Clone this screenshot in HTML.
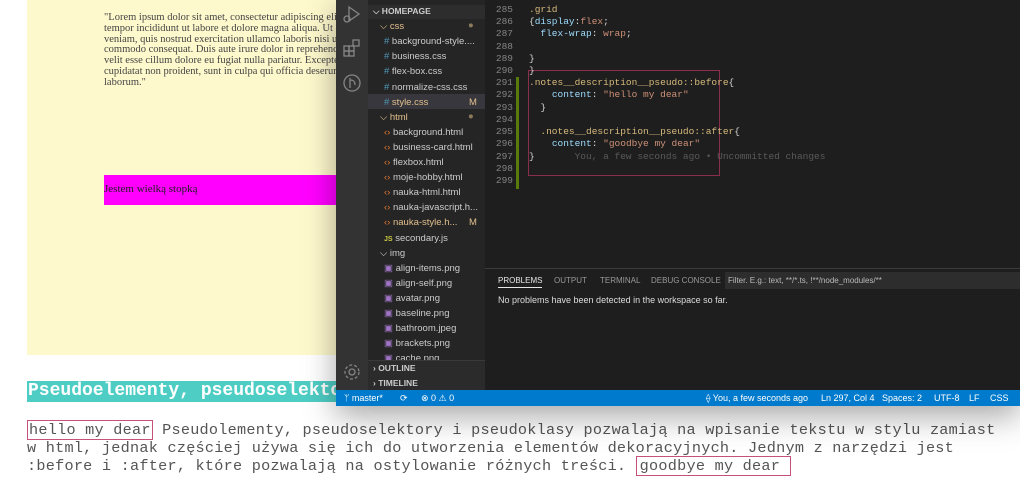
<!DOCTYPE html><html><head><meta charset="utf-8"><style>
*{margin:0;padding:0;box-sizing:border-box}
body{width:1020px;height:491px;overflow:hidden;background:#fff;position:relative;font-family:"Liberation Sans",sans-serif}
.abs{position:absolute}
.yellow{left:27px;top:0;width:309px;height:355px;background:#fef9cc}
.lorem{left:104px;top:13px;width:232px;font:10.5px/10.8px "Liberation Serif",serif;color:#444;white-space:nowrap;overflow:hidden}
.mag{left:104px;top:175px;width:232px;height:30px;background:#f0f;font:11px "Liberation Serif",serif;color:#222;padding-top:8px}
.head{left:27px;top:381px;width:309px;height:21px;background:#4ecdc4;color:#fff;font:bold 18px "Liberation Mono",monospace;padding:0 1px;white-space:nowrap;overflow:hidden}
.para{left:27px;top:421px;font:15.2px/18px "Liberation Mono",monospace;letter-spacing:0.25px;color:#555;white-space:pre}
.box{border:1px solid #c94f7c}
.win{left:336px;top:0;width:684px;height:406px;background:#1e1e1e;box-shadow:0 10px 30px rgba(0,0,0,.35)}
.act{left:0;top:0;width:32px;height:390px;background:#333}
.side{left:32px;top:0;width:117px;height:390px;background:#252526;font-size:9.5px;color:#ccc}
.side div{position:absolute;white-space:nowrap}
.ed{left:149px;top:0;width:535px;height:268px;background:#1e1e1e;font:9.5px "Liberation Mono",monospace}
.ln{position:absolute;left:8px;width:20px;text-align:right;color:#858585}
.cd{position:absolute;left:44px;white-space:pre;color:#d4d4d4}
.sel{color:#d7ba7d}.pr{color:#9cdcfe}.st{color:#ce9178}
.status{left:0;top:390px;width:684px;height:16px;background:#007acc;color:#fff;font-size:9px}
.status span{position:absolute;top:3px;white-space:nowrap}
</style></head><body>
<div class="abs yellow"></div>
<div class="abs lorem">"Lorem ipsum dolor sit amet, consectetur adipiscing elit, sed<br>tempor incididunt ut labore et dolore magna aliqua. Ut enim<br>veniam, quis nostrud exercitation ullamco laboris nisi ut aliq<br>commodo consequat. Duis aute irure dolor in reprehenderit i<br>velit esse cillum dolore eu fugiat nulla pariatur. Excepteur si<br>cupidatat non proident, sunt in culpa qui officia deserunt mo<br>laborum."</div>
<div class="abs mag">Jestem wielką stopką</div>
<div class="abs head">Pseudoelementy, pseudoselektory</div>
<div class="abs para"><span class="box" style="padding:0 1px">hello my dear</span> Pseudolementy, pseudoselektory i pseudoklasy pozwalają na wpisanie tekstu w stylu zamiast
w html, jednak częściej używa się ich do utworzenia elementów dekoracyjnych. Jednym z narzędzi jest
:before i :after, które pozwalają na ostylowanie różnych treści. <span class="box" style="padding:0 10px 0 3px">goodbye my dear</span></div>
<div class="abs win">
<div class="abs act">
<svg class="abs" style="left:6px;top:4px" width="20" height="20" viewBox="0 0 20 20" fill="none" stroke="#858585" stroke-width="1.3"><path d="M7 3l10 7-10 7z"/><circle cx="5" cy="15" r="3"/></svg>
<svg class="abs" style="left:6px;top:38px" width="20" height="20" viewBox="0 0 20 20" fill="none" stroke="#858585" stroke-width="1.3"><rect x="2" y="8" width="5" height="5"/><rect x="7" y="8" width="5" height="5"/><rect x="2" y="13" width="5" height="5"/><rect x="7" y="13" width="5" height="5"/><rect x="11" y="2" width="6" height="6"/></svg>
<svg class="abs" style="left:6px;top:73px" width="20" height="20" viewBox="0 0 20 20" fill="none" stroke="#858585" stroke-width="1.3"><circle cx="10" cy="10" r="8"/><path d="M8 5v10M8 7c4 0 5 2 5 5"/></svg>
<svg class="abs" style="left:6px;top:362px" width="20" height="20" viewBox="0 0 20 20" fill="none" stroke="#858585" stroke-width="1.3"><circle cx="10" cy="10" r="3"/><circle cx="10" cy="10" r="7" stroke-dasharray="3 2"/></svg>
</div>
<div class="abs side">
<div style="left:0;top:5px;width:117px;height:14px;background:#2d2d2e"></div>
<div style="left:5px;top:6px;font-weight:bold;font-size:8.5px">⌵ HOMEPAGE</div>
<div style="left:12px;top:21px;color:#e2c08d">⌵ css</div><div style="left:100px;top:20px;color:#8c7a5c">●</div>
<div style="left:16px;top:36px"><span style="color:#519aba">#</span> background-style....</div>
<div style="left:16px;top:51px"><span style="color:#519aba">#</span> business.css</div>
<div style="left:16px;top:66px"><span style="color:#519aba">#</span> flex-box.css</div>
<div style="left:16px;top:82px"><span style="color:#519aba">#</span> normalize-css.css</div>
<div style="left:0;top:94px;width:117px;height:15px;background:#37373d"></div>
<div style="left:16px;top:97px;color:#e2c08d"><span style="color:#519aba">#</span> style.css</div><div style="left:101px;top:97px;color:#e2c08d">M</div>
<div style="left:12px;top:112px;color:#e2c08d">⌵ html</div><div style="left:100px;top:111px;color:#8c7a5c">●</div>
<div style="left:16px;top:127px"><span style="color:#e37933">‹›</span> background.html</div>
<div style="left:16px;top:142px"><span style="color:#e37933">‹›</span> business-card.html</div>
<div style="left:16px;top:157px"><span style="color:#e37933">‹›</span> flexbox.html</div>
<div style="left:16px;top:172px"><span style="color:#e37933">‹›</span> moje-hobby.html</div>
<div style="left:16px;top:187px"><span style="color:#e37933">‹›</span> nauka-html.html</div>
<div style="left:16px;top:202px"><span style="color:#e37933">‹›</span> nauka-javascript.h...</div>
<div style="left:16px;top:217px;color:#e2c08d"><span style="color:#e37933">‹›</span> nauka-style.h...</div><div style="left:101px;top:217px;color:#e2c08d">M</div>
<div style="left:16px;top:233px"><span style="color:#cbcb41;font-size:7px;font-weight:bold">JS</span> secondary.js</div>
<div style="left:12px;top:248px">⌵ img</div>
<div style="left:16px;top:263px"><span style="color:#a074c4">▣</span> align-items.png</div>
<div style="left:16px;top:278px"><span style="color:#a074c4">▣</span> align-self.png</div>
<div style="left:16px;top:293px"><span style="color:#a074c4">▣</span> avatar.png</div>
<div style="left:16px;top:308px"><span style="color:#a074c4">▣</span> baseline.png</div>
<div style="left:16px;top:323px"><span style="color:#a074c4">▣</span> bathroom.jpeg</div>
<div style="left:16px;top:338px"><span style="color:#a074c4">▣</span> brackets.png</div>
<div style="left:16px;top:353px"><span style="color:#a074c4">▣</span> cache.png</div>
<div style="left:0;top:360px;width:117px;height:30px;background:#2b2b2c;border-top:1px solid #3a3a3a"></div>
<div style="left:5px;top:363px;font-weight:bold;font-size:8.5px">› OUTLINE</div>
<div style="left:5px;top:378px;font-weight:bold;font-size:8.5px">› TIMELINE</div>
</div>
<div class="abs ed">
<div class="abs" style="left:31px;top:77px;width:3px;height:112px;background:#587c0c"></div>
<div class="abs" style="left:43px;top:70px;width:192px;height:106px;border:1px solid #8a2e4c"></div>
<div class="ln" style="top:4px">285</div><div class="cd sel" style="top:4px">.grid</div>
<div class="ln" style="top:16px">286</div><div class="cd" style="top:16px">{<span class="pr">display</span>:<span class="st">flex</span>;</div>
<div class="ln" style="top:28px">287</div><div class="cd" style="top:28px">  <span class="pr">flex-wrap</span>: <span class="st">wrap</span>;</div>
<div class="ln" style="top:41px">288</div>
<div class="ln" style="top:53px">289</div><div class="cd" style="top:53px">}</div>
<div class="ln" style="top:65px">290</div><div class="cd" style="top:65px">}</div>
<div class="ln" style="top:77px">291</div><div class="cd sel" style="top:77px">.notes__description__pseudo::before<span style="color:#d4d4d4">{</span></div>
<div class="ln" style="top:89px">292</div><div class="cd" style="top:89px">    <span class="pr">content</span>: <span class="st">"hello my dear"</span></div>
<div class="ln" style="top:102px">293</div><div class="cd" style="top:102px">  }</div>
<div class="ln" style="top:114px">294</div>
<div class="ln" style="top:126px">295</div><div class="cd sel" style="top:126px">  .notes__description__pseudo::after<span style="color:#d4d4d4">{</span></div>
<div class="ln" style="top:138px">296</div><div class="cd" style="top:138px">    <span class="pr">content</span>: <span class="st">"goodbye my dear"</span></div>
<div class="ln" style="top:151px">297</div><div class="cd" style="top:151px">}       <span style="color:#5a5a5a">You, a few seconds ago • Uncommitted changes</span></div>
<div class="ln" style="top:163px">298</div>
<div class="ln" style="top:175px">299</div>
</div>
<div class="abs" style="left:149px;top:268px;width:535px;height:122px;background:#1e1e1e;border-top:1px solid #3c3c3c;font-size:8px;color:#999">
<span class="abs" style="left:13px;top:7px;color:#e7e7e7;border-bottom:1px solid #e7e7e7;padding-bottom:2px">PROBLEMS</span>
<span class="abs" style="left:69px;top:7px">OUTPUT</span>
<span class="abs" style="left:115px;top:7px">TERMINAL</span>
<span class="abs" style="left:166px;top:7px">DEBUG CONSOLE</span>
<div class="abs" style="left:240px;top:3px;width:295px;height:17px;background:#2d2d2d;color:#bbb;padding:4px 3px">Filter. E.g.: text, **/*.ts, !**/node_modules/**</div>
<span class="abs" style="left:13px;top:26px;color:#ddd;font-size:9px">No problems have been detected in the workspace so far.</span>
</div>
<div class="abs status">
<span style="left:8px">ᛘ master*</span><span style="left:64px">⟳</span><span style="left:85px">⊗ 0 ⚠ 0</span>
<span style="left:370px">⟠ You, a few seconds ago</span><span style="left:485px">Ln 297, Col 4</span><span style="left:546px">Spaces: 2</span><span style="left:598px">UTF-8</span><span style="left:633px">LF</span><span style="left:654px">CSS</span>
</div>
</div>
</body></html>
